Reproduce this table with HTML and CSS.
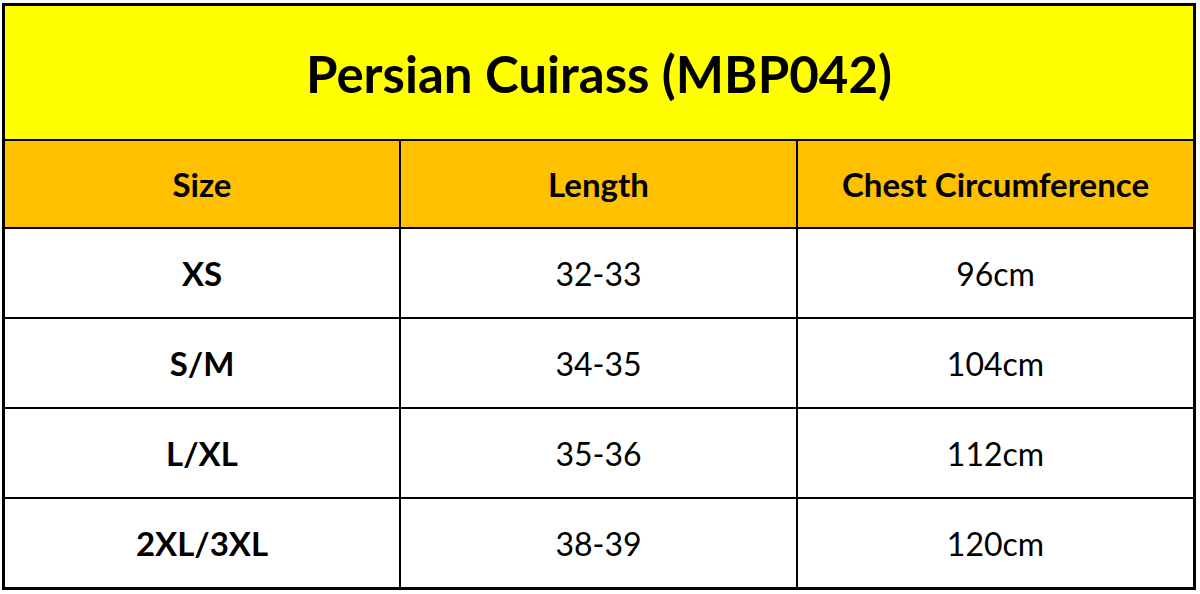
FILE: index.html
```html
<!DOCTYPE html>
<html>
<head>
<meta charset="utf-8">
<link rel="stylesheet" href="styles.css">
</head>
<body>
<div class="chart">
  <div class="title">Persian Cuirass (MBP042)</div>
  <div class="cell head">Size</div>
  <div class="cell head">Length</div>
  <div class="cell head">Chest Circumference</div>
  <div class="cell size">XS</div>
  <div class="cell">32-33</div>
  <div class="cell">96cm</div>
  <div class="cell size">S/M</div>
  <div class="cell">34-35</div>
  <div class="cell">104cm</div>
  <div class="cell size">L/XL</div>
  <div class="cell">35-36</div>
  <div class="cell">112cm</div>
  <div class="cell size">2XL/3XL</div>
  <div class="cell">38-39</div>
  <div class="cell">120cm</div>
</div>
</body>
</html>
```

FILE: styles.css
```css
html, body {
  margin: 0;
  padding: 0;
  background: #ffffff;
}
body {
  padding: 3px 0 0 2px;
  font-family: Lato, "Open Sans", sans-serif;
  color: #000;
}
.chart {
  width: 1194px;
  height: 587px;
  box-sizing: border-box;
  border: 3px solid #000;
  background: #000;
  display: grid;
  grid-template-columns: 394px 395px 395px;
  grid-template-rows: 133px 86px 88px 88px 88px 88px;
  gap: 2px;
}
.title {
  grid-column: 1 / 4;
  background: #ffff00;
  display: flex;
  align-items: center;
  justify-content: center;
  font-weight: 700;
  font-size: 51px;
  padding-top: 2px;
  box-sizing: border-box;
}
.cell {
  background: #ffffff;
  display: flex;
  align-items: center;
  justify-content: center;
  font-size: 32px;
}
.head {
  background: #ffc000;
  font-weight: 700;
  font-size: 33px;
}
.size {
  font-weight: 700;
  font-size: 33px;
}
```
